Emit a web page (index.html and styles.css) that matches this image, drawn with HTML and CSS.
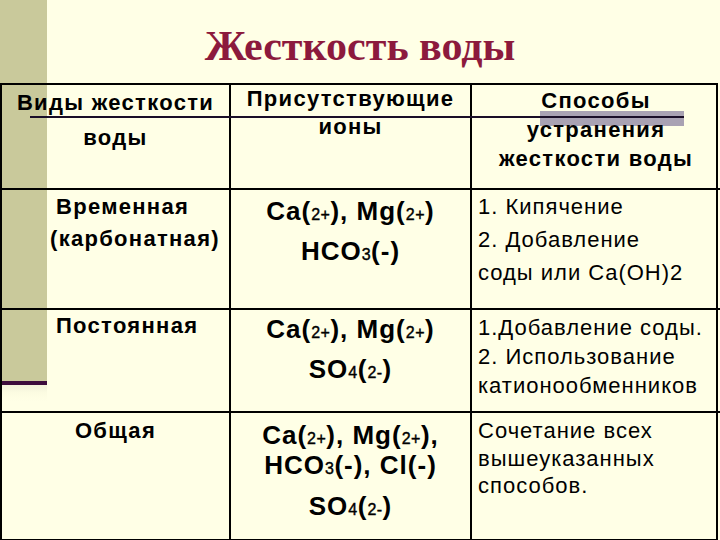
FILE: index.html
```html
<!DOCTYPE html>
<html lang="ru">
<head>
<meta charset="utf-8">
<title>Жесткость воды</title>
<link rel="stylesheet" href="styles.css">
</head>
<body>
<div class="slide">
  <div class="strip"></div>
  <div class="strip-end"></div>
  <div class="deco-box"></div>
  <div class="deco-line"></div>
  <h1 class="title">Жесткость воды</h1>
  <div class="table">
    <div class="cell head c1 h-c1">Виды жесткости<br>воды</div>
    <div class="cell head c2 h-c2">Присутствующие<br>ионы</div>
    <div class="cell head c3 h-c3">Способы<br>устранения<br>жесткости воды</div>

    <div class="cell kind r1-c1"><span class="ind">Временная</span><br>(карбонатная)</div>
    <div class="cell ions r1-c2">Ca(<span class="sm">2+</span>), Mg(<span class="sm">2+</span>)<br>HCO<span class="sm">3</span>(-)</div>
    <div class="cell way r1-c3">1. Кипячение<br>2. Добавление<br>соды или Ca(OH)2</div>

    <div class="cell kind r2-c1">Постоянная</div>
    <div class="cell ions r2-c2">Ca(<span class="sm">2+</span>), Mg(<span class="sm">2+</span>)<br>SO<span class="sm">4</span>(<span class="sm">2-</span>)</div>
    <div class="cell way r2-c3">1.Добавление соды.<br>2. Использование<br>катионообменников</div>

    <div class="cell kind r3-c1">Общая</div>
    <div class="cell ions r3-c2"><p class="tight">Ca(<span class="sm">2+</span>), Mg(<span class="sm">2+</span>),<br>HCO<span class="sm">3</span>(-), Cl(-)</p><p class="last">SO<span class="sm">4</span>(<span class="sm">2-</span>)</p></div>
    <div class="cell way r3-c3">Сочетание всех<br>вышеуказанных<br>способов.</div>
  </div>
</div>
</body>
</html>
```

FILE: styles.css
```css
* { box-sizing: border-box; }
html, body { margin: 0; padding: 0; }
body {
  background: #FFFFE6;
  font-family: "Liberation Sans", Arial, sans-serif;
  color: #000;
}
.slide {
  position: relative;
  width: 720px;
  height: 540px;
  overflow: hidden;
  background: #FFFFE6;
}
.strip {
  position: absolute;
  left: 0; top: 0;
  width: 47px; height: 381px;
  background: #C9C99B;
  z-index: 0;
}
.strip-end {
  position: absolute;
  left: 0; top: 381px;
  width: 47px; height: 20px;
  background: linear-gradient(#3C0C3C 0, #3C0C3C 4px, #F3F3DA 4px, #F6F6DE 8px, #FCFCE2 12px, #FFFFE6 20px);
  z-index: 0;
}
.deco-box {
  position: absolute;
  left: 540px; top: 111px;
  width: 144px; height: 15px;
  background: #A9A2B3;
  z-index: 0;
}
.deco-line {
  position: absolute;
  left: 30px; top: 116px;
  width: 654px; height: 2px;
  background: #1A0E28;
  z-index: 3;
}
.title {
  position: relative;
  z-index: 1;
  margin: 0;
  padding-top: 23px;
  height: 83px;
  font-family: "Liberation Serif", "Times New Roman", serif;
  font-weight: bold;
  font-size: 42px;
  line-height: 46px;
  color: #8C1A3D;
  text-align: center;
}
.table {
  position: relative;
  z-index: 1;
  display: grid;
  grid-template-columns: 229px 241px 248px;
  grid-template-rows: 105px 120px 103px 126px;
  width: 718px;
  border: 2px solid #000;
}
.cell {
  border-right: 2px solid #000;
  border-bottom: 2px solid #000;
}
.c3, .r1-c3, .r2-c3, .r3-c3 { border-right: none; }
.r3-c1, .r3-c2, .r3-c3 { border-bottom: none; }

.head {
  font-weight: bold;
  font-size: 22px;
  text-align: center;
  letter-spacing: 1.3px;
}
.h-c1 { line-height: 35px; padding-top: 0; }
.h-c2 { line-height: 28px; padding-top: 0; }
.h-c3 { line-height: 29px; padding-top: 1px; }

.kind {
  font-weight: bold;
  font-size: 22px;
  line-height: 32px;
  letter-spacing: 1.3px;
}
.r1-c1 { padding: 1px 0 0 48px; }
.r1-c1 .ind { padding-left: 6px; }
.r2-c1 { padding: 0 0 0 54px; }
.r3-c1 { padding: 2px 0 0 0; text-align: center; }

.ions {
  font-weight: bold;
  font-size: 26px;
  line-height: 36px;
  letter-spacing: 1px;
  text-align: center;
}
.sm { font-size: 16px; font-weight: normal; letter-spacing: 0.5px; -webkit-text-stroke: 0.4px #000; }
.r1-c2 { padding-top: 3px; }
.r2-c2 { padding-top: 1px; }
.r3-c2 { padding-top: 9px; }
.ions p { margin: 0; }
.ions .tight { line-height: 27px; }
.ions .last { margin-top: 6px; line-height: 36px; }

.way {
  font-size: 22px;
  padding-left: 6px;
  letter-spacing: 1px;
}
.r1-c3 { line-height: 33px; padding-top: 0; }
.r2-c3 { line-height: 29px; padding-top: 3px; }
.r3-c3 { line-height: 27.5px; padding-top: 4px; }
```
